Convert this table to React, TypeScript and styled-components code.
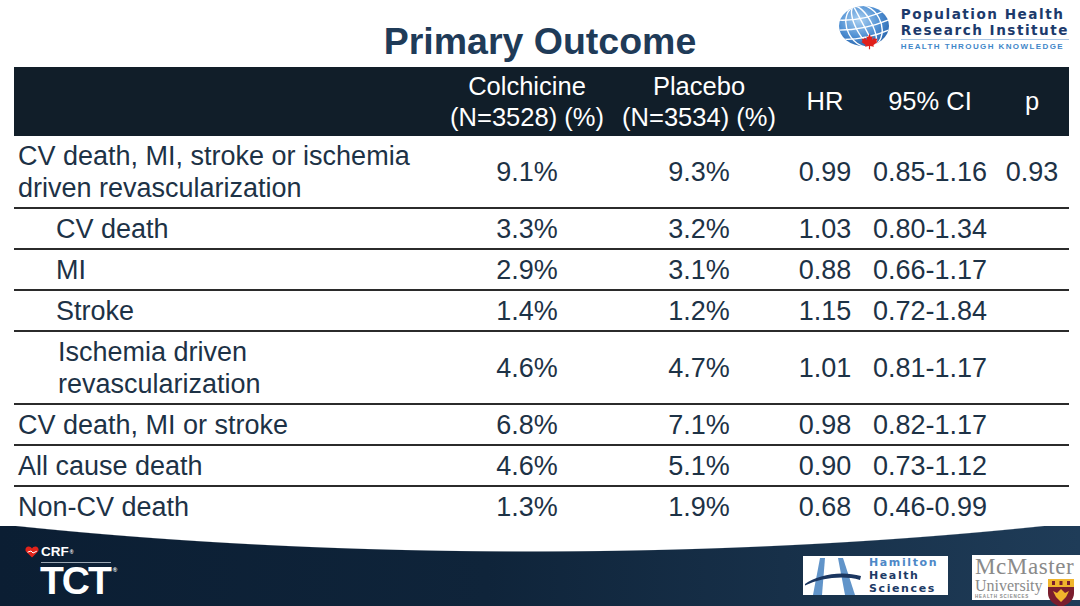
import styled, { createGlobalStyle } from 'styled-components';

const GlobalStyle = createGlobalStyle`
  html, body {
    margin: 0;
    padding: 0;
    background: #ffffff;
  }
  body {
    font-family: 'Liberation Sans', Arial, sans-serif;
  }
`;

type Outcome = {
  label: string[];
  indent?: number;
  colchicine: string;
  placebo: string;
  hr: string;
  ci: string;
  p?: string;
};

const OUTCOMES: Outcome[] = [
  {
    label: ['CV death, MI, stroke or ischemia', 'driven revascularization'],
    colchicine: '9.1%',
    placebo: '9.3%',
    hr: '0.99',
    ci: '0.85-1.16',
    p: '0.93',
  },
  { label: ['CV death'], indent: 42, colchicine: '3.3%', placebo: '3.2%', hr: '1.03', ci: '0.80-1.34' },
  { label: ['MI'], indent: 42, colchicine: '2.9%', placebo: '3.1%', hr: '0.88', ci: '0.66-1.17' },
  { label: ['Stroke'], indent: 42, colchicine: '1.4%', placebo: '1.2%', hr: '1.15', ci: '0.72-1.84' },
  {
    label: ['Ischemia driven', 'revascularization'],
    indent: 44,
    colchicine: '4.6%',
    placebo: '4.7%',
    hr: '1.01',
    ci: '0.81-1.17',
  },
  { label: ['CV death, MI or stroke'], colchicine: '6.8%', placebo: '7.1%', hr: '0.98', ci: '0.82-1.17' },
  { label: ['All cause death'], colchicine: '4.6%', placebo: '5.1%', hr: '0.90', ci: '0.73-1.12' },
  { label: ['Non-CV death'], colchicine: '1.3%', placebo: '1.9%', hr: '0.68', ci: '0.46-0.99' },
];

const COLUMNS = '427px 172px 172px 80px 130px 74px';

function Globe() {
  return (
    <svg width='56' height='46' viewBox='0 0 56 46'>
      <defs>
        <radialGradient id='globeFill' cx='40%' cy='35%' r='70%'>
          <stop offset='0%' stopColor='#a9d0f2' />
          <stop offset='60%' stopColor='#4f8fd2' />
          <stop offset='100%' stopColor='#2a66ad' />
        </radialGradient>
        <clipPath id='globeClip'>
          <ellipse cx='27' cy='21' rx='25' ry='20' />
        </clipPath>
      </defs>
      <ellipse cx='27' cy='21' rx='25' ry='20' fill='url(#globeFill)' />
      <g clipPath='url(#globeClip)' stroke='#ffffff' strokeWidth='1.4' fill='none'>
        <g transform='rotate(-28 27 21)'>
          <ellipse cx='27' cy='21' rx='8' ry='22' />
          <ellipse cx='27' cy='21' rx='17' ry='22' />
          <line x1='27' y1='-2' x2='27' y2='44' />
        </g>
        <g transform='rotate(-12 27 21)'>
          <path d='M0 9 Q27 17 56 9' />
          <path d='M-2 19 Q27 26 58 19' />
          <path d='M0 29 Q27 36 56 29' />
        </g>
      </g>
      <path
        transform='translate(24 28) scale(0.85)'
        fill='#e0201b'
        d='M10 1 L11.6 4.6 L13.6 3.8 L12.9 8.2 L15.6 5.4 L16.2 7.2 L19.2 6.6 L18.2 9.6 L19.6 10.6 L14.6 14.2 L15.2 16.2 L10.7 15.4 L10.7 19 L9.3 19 L9.3 15.4 L4.8 16.2 L5.4 14.2 L0.4 10.6 L1.8 9.6 L0.8 6.6 L3.8 7.2 L4.4 5.4 L7.1 8.2 L6.4 3.8 L8.4 4.6 Z'
      />
    </svg>
  );
}

function CrfHeart() {
  return (
    <svg width='14' height='12' viewBox='0 0 14 12'>
      <path
        fill='#e2231a'
        d='M7 11.5 L1.2 5.8 C-0.4 3.8 0.6 0.5 3.6 0.5 C5.1 0.5 6.3 1.4 7 2.5 C7.7 1.4 8.9 0.5 10.4 0.5 C13.4 0.5 14.4 3.8 12.8 5.8 Z'
      />
      <path d='M2.5 6.2 L6 5 L8 7 L11.8 5.2' stroke='#ffffff' strokeWidth='1' fill='none' />
    </svg>
  );
}

function HamiltonMark() {
  return (
    <svg width='64' height='38' viewBox='0 0 64 38'>
      <polygon points='10,38 19,38 22,1 17,1' fill='#6194c9' />
      <polygon points='42,38 52,38 40,1 35,1' fill='#6194c9' />
      <path
        d='M2 27 C 14 18, 38 13, 58 19 L 57 23 C 40 18, 18 21, 2 28.5 Z'
        fill='#1b3660'
      />
    </svg>
  );
}

function McMasterShield() {
  return (
    <svg width='28' height='30' viewBox='0 0 28 30'>
      <path d='M1 1 H27 V15 C27 23 20 27 14 29 C8 27 1 23 1 15 Z' fill='#7a1e2e' />
      <rect x='1' y='1' width='26' height='8' fill='#f0b52c' />
      <rect x='5' y='3' width='3' height='4' fill='#7a1e2e' />
      <rect x='12.5' y='3' width='3' height='4' fill='#7a1e2e' />
      <rect x='20' y='3' width='3' height='4' fill='#7a1e2e' />
      <path d='M14 11 L18 15 L22 13 L19 19 L14 24 L9 19 L6 13 L10 15 Z' fill='#f0b52c' />
    </svg>
  );
}

export default function App(): JSX.Element {
  return (
    <>
      <GlobalStyle />
      <Slide>
        <TopBar>
          <Title>Primary Outcome</Title>
          <PhriLogo>
            <Globe />
            <PhriText>
              <PhriName>Population Health</PhriName>
              <PhriName>Research Institute</PhriName>
              <PhriRule />
              <PhriTagline>HEALTH THROUGH KNOWLEDGE</PhriTagline>
            </PhriText>
          </PhriLogo>
        </TopBar>

        <Table>
          <HeadRow>
            <HeadCell />
            <HeadCell>
              Colchicine
              <br />
              (N=3528) (%)
            </HeadCell>
            <HeadCell>
              Placebo
              <br />
              (N=3534) (%)
            </HeadCell>
            <HeadCell>HR</HeadCell>
            <HeadCell>95% CI</HeadCell>
            <HeadCell>p</HeadCell>
          </HeadRow>
          {OUTCOMES.map((row, i) => (
            <BodyRow key={row.label.join(' ')} $tall={row.label.length > 1} $first={i === 0}>
              <LabelCell $indent={row.indent ?? 4}>
                {row.label.map((line) => (
                  <span key={line}>{line}</span>
                ))}
              </LabelCell>
              <ValueCell>{row.colchicine}</ValueCell>
              <ValueCell>{row.placebo}</ValueCell>
              <ValueCell>{row.hr}</ValueCell>
              <ValueCell>{row.ci}</ValueCell>
              <ValueCell>{row.p ?? ''}</ValueCell>
            </BodyRow>
          ))}
        </Table>

        <Footer>
          <TctLogo>
            <CrfLine>
              <CrfHeart />
              <CrfText>
                CRF<Reg>®</Reg>
              </CrfText>
            </CrfLine>
            <TctRule />
            <TctText>
              TCT<TctReg>®</TctReg>
            </TctText>
          </TctLogo>

          <PartnerLogos>
            <HamiltonBox>
              <HamiltonMark />
              <HamiltonText>
                <HamiltonLine $light>Hamilton</HamiltonLine>
                <HamiltonLine>Health</HamiltonLine>
                <HamiltonLine>Sciences</HamiltonLine>
              </HamiltonText>
            </HamiltonBox>
            <McMasterBox>
              <McMasterName>McMaster</McMasterName>
              <McMasterLower>
                <McMasterSub>
                  <McMasterUni>University</McMasterUni>
                  <McMasterTag>HEALTH SCIENCES</McMasterTag>
                </McMasterSub>
                <McMasterShield />
              </McMasterLower>
            </McMasterBox>
          </PartnerLogos>
        </Footer>
      </Slide>
    </>
  );
}

const Slide = styled.div`
  width: 1080px;
  height: 606px;
  display: flex;
  flex-direction: column;
  overflow: hidden;
  background: #ffffff;
`;

const TopBar = styled.header`
  height: 67px;
  display: grid;
  grid-template-columns: 1fr auto 1fr;
`;

const Title = styled.h1`
  grid-column: 2;
  margin: 20px 0 0;
  font-size: 37.5px;
  line-height: 42px;
  font-weight: 700;
  color: #1f3b58;
  white-space: nowrap;
`;

const PhriLogo = styled.div`
  grid-column: 3;
  justify-self: end;
  display: flex;
  align-items: flex-start;
  gap: 8px;
  padding: 5px 11px 0 0;
`;

const PhriText = styled.div`
  display: flex;
  flex-direction: column;
  padding-top: 1px;
`;

const PhriName = styled.div`
  font-family: 'DejaVu Sans', sans-serif;
  font-weight: 700;
  font-size: 13.6px;
  line-height: 16px;
  letter-spacing: 1.5px;
  color: #1c3a6c;
  white-space: nowrap;
`;

const PhriRule = styled.div`
  height: 1px;
  margin: 1px 0 2px;
  background: #a9c6e4;
`;

const PhriTagline = styled.div`
  font-family: 'Liberation Sans', Arial, sans-serif;
  font-weight: 700;
  font-size: 8px;
  line-height: 9px;
  letter-spacing: 1.4px;
  color: #3f87c9;
  white-space: nowrap;
`;

const Table = styled.div`
  width: 1055px;
  margin-left: 14px;
  display: flex;
  flex-direction: column;
`;

const HeadRow = styled.div`
  display: grid;
  grid-template-columns: ${COLUMNS};
  height: 69px;
  background: #111e29;
`;

const HeadCell = styled.div`
  display: flex;
  align-items: center;
  justify-content: center;
  text-align: center;
  color: #ffffff;
  font-size: 25.5px;
  line-height: 31px;
  white-space: nowrap;
`;

const BodyRow = styled.div<{ $tall: boolean; $first: boolean }>`
  display: grid;
  grid-template-columns: ${COLUMNS};
  height: ${({ $tall }) => ($tall ? 71 : 39)}px;
  border-top: ${({ $first }) => ($first ? 'none' : '2px solid #2b2b2b')};
  color: #1d3246;
  font-size: 27px;
  line-height: 32px;
`;

const LabelCell = styled.div<{ $indent: number }>`
  display: flex;
  flex-direction: column;
  justify-content: center;
  padding-left: ${({ $indent }) => $indent}px;
  white-space: nowrap;
`;

const ValueCell = styled.div`
  display: flex;
  align-items: center;
  justify-content: center;
  white-space: nowrap;
`;

const Footer = styled.footer`
  flex: 1;
  display: flex;
  align-items: flex-start;
  padding: 20px 0 0 25px;
  background:
    radial-gradient(ellipse 1200px 264px at 530px -238px, #ffffff 99.6%, rgba(255, 255, 255, 0) 100%),
    linear-gradient(90deg, #0b1e33 0%, #0f243a 45%, #1f3c58 100%);
`;

const TctLogo = styled.div`
  display: flex;
  flex-direction: column;
`;

const CrfLine = styled.div`
  display: flex;
  align-items: center;
  gap: 2px;
  height: 12px;
`;

const CrfText = styled.span`
  color: #ffffff;
  font-weight: 700;
  font-size: 13.5px;
  line-height: 12px;
`;

const Reg = styled.sup`
  font-size: 5px;
  vertical-align: top;
  margin-left: 1px;
`;

const TctRule = styled.div`
  width: 70px;
  height: 1px;
  margin: 4px 0 0 16px;
  background: #9aa6b2;
`;

const TctText = styled.div`
  margin: 3px 0 0 15px;
  color: #ffffff;
  font-weight: 700;
  font-size: 39px;
  line-height: 30px;
  letter-spacing: -2px;
`;

const TctReg = styled.sup`
  font-size: 6px;
  letter-spacing: 0;
  vertical-align: top;
  line-height: 8px;
  margin-left: 3px;
`;

const PartnerLogos = styled.div`
  margin-left: auto;
  margin-top: 9px;
  display: flex;
  align-items: flex-start;
  gap: 24px;
`;

const HamiltonBox = styled.div`
  width: 145px;
  height: 39px;
  margin-top: 1px;
  display: flex;
  align-items: center;
  background: #ffffff;
`;

const HamiltonText = styled.div`
  display: flex;
  flex-direction: column;
  margin-left: 2px;
`;

const HamiltonLine = styled.span<{ $light?: boolean }>`
  font-family: 'DejaVu Sans', sans-serif;
  font-weight: 700;
  font-size: 11px;
  line-height: 13px;
  letter-spacing: 1.6px;
  color: ${({ $light }) => ($light ? '#4d88c7' : '#1d3a66')};
`;

const McMasterBox = styled.div`
  box-sizing: border-box;
  width: 108px;
  height: 45px;
  display: flex;
  flex-direction: column;
  padding-left: 3px;
  background: #ffffff;
`;

const McMasterName = styled.div`
  font-family: 'Liberation Serif', 'Times New Roman', serif;
  font-size: 23px;
  line-height: 23px;
  letter-spacing: 0.6px;
  color: #8a8a8a;
`;

const McMasterLower = styled.div`
  display: flex;
  align-items: flex-start;
  gap: 4px;
`;

const McMasterSub = styled.div`
  display: flex;
  flex-direction: column;
`;

const McMasterUni = styled.span`
  font-family: 'Liberation Serif', 'Times New Roman', serif;
  font-size: 16px;
  line-height: 16px;
  color: #8a8a8a;
`;

const McMasterTag = styled.span`
  font-family: 'Liberation Sans', Arial, sans-serif;
  font-weight: 700;
  font-size: 4.5px;
  letter-spacing: 0.8px;
  line-height: 6px;
  color: #8a8a8a;
  white-space: nowrap;
`;
